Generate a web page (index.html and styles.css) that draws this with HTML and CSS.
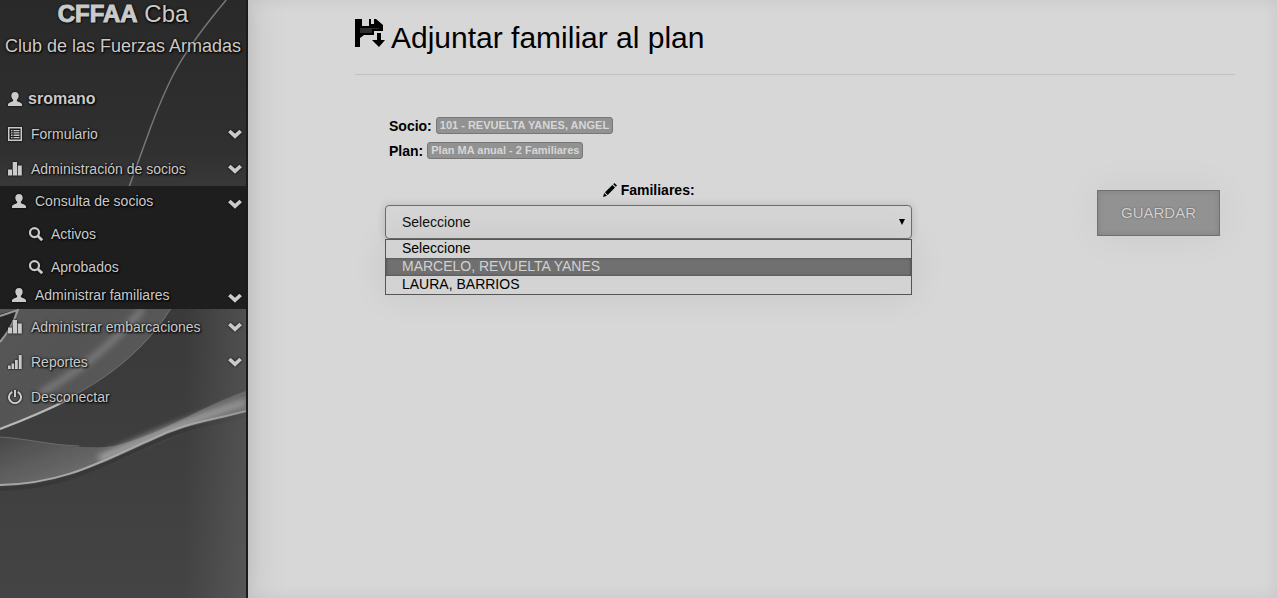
FILE: index.html
```html
<!DOCTYPE html>
<html lang="es">
<head>
<meta charset="utf-8">
<meta name="viewport" content="width=device-width, initial-scale=1">
<title>CFFAA Cba - Adjuntar familiar al plan</title>
<link rel="stylesheet" href="styles.css">
</head>
<body class="page">
<svg class="sprite" width="0" height="0" aria-hidden="true">
  <symbol id="user" viewBox="0 0 14 14"><path d="M7 0C4.700 0 3.300 1.500 3.300 3.700C3.300 5.500 4.100 6.800 5.100 7.700V9C4.600 9.900 0 10.300 0 12.500V14H14V12.500C14 10.300 9.400 9.900 8.900 9V7.700C9.900 6.800 10.700 5.500 10.700 3.700C10.700 1.500 9.300 0 7 0Z"/></symbol>
  <symbol id="list" viewBox="0 0 14 14"><path fill-rule="evenodd" d="M0 0H14V14H0ZM1.500 1.500V12.500H12.500V1.500ZM3 3H4.500V4.300H3ZM5.500 3H11.500V4.300H5.500ZM3 5.300H4.500V6.600H3ZM5.500 5.300H11.500V6.600H5.500ZM3 7.600H4.500V8.900H3ZM5.500 7.600H11.500V8.900H5.500ZM3 9.900H4.500V11.200H3ZM5.500 9.900H11.500V11.200H5.500Z"/></symbol>
  <symbol id="stats" viewBox="0 0 14 14"><path d="M0 7.500H4V13.500H0ZM4.700 0H9V13.500H4.700ZM9.700 3.500H13.800V13.500H9.700Z"/></symbol>
  <symbol id="signal" viewBox="0 0 14 14"><path d="M0 10.500H2.700V14H0ZM3.500 8.500H6.200V14H3.500ZM7 5H9.800V14H7ZM10.700 0H13.700V14H10.700Z"/></symbol>
  <symbol id="search" viewBox="0 0 14 14"><path fill="none" stroke="currentColor" stroke-width="2.200" d="M10 5.600A4.500 4.500 0 1 1 1 5.600A4.500 4.500 0 1 1 10 5.600Z"/><path fill="none" stroke="currentColor" stroke-width="2.800" d="M8.800 8.900L13.200 13.200"/></symbol>
  <symbol id="off" viewBox="0 0 14 14"><path fill="none" stroke="currentColor" stroke-width="2" d="M4.300 1.800A6 6 0 1 0 9.700 1.800"/><path d="M6 0H8V7H6Z"/></symbol>
  <symbol id="chevron" viewBox="0 0 14 10"><path fill="none" stroke="currentColor" stroke-width="3.700" d="M1.300 2L7 7.200L12.700 2"/></symbol>
  <symbol id="save" viewBox="0 0 30 30"><path d="M0 1H7V8H14V1H16V6H19V1H21L28 7V13H19V17H9L5 20V29H0Z"/><path d="M22 15H26V22H30L24 29L17 22H22Z"/><path fill="#2e2e2e" d="M5 10H24V11H17V15H5Z"/></symbol>
  <symbol id="pencil" viewBox="0 0 14 14"><path d="M0 14L1.300 10L4 12.700ZM2 9.300L9.400 2L12 4.600L4.700 12ZM10.200 1.200L11.400 0L14 2.600L12.800 3.800Z"/></symbol>
</svg>

<aside class="sidebar">
  <svg class="waves" viewBox="0 0 248 598" preserveAspectRatio="none" aria-hidden="true">
    <defs>
      <linearGradient id="base" x1="0" y1="0" x2="0" y2="1">
        <stop offset="0" stop-color="#292929"/><stop offset=".25" stop-color="#303030"/><stop offset=".31" stop-color="#383838"/><stop offset=".6" stop-color="#3b3b3b"/><stop offset="1" stop-color="#444"/>
      </linearGradient>
      <linearGradient id="ribbon" gradientUnits="userSpaceOnUse" x1="0" y1="310" x2="90" y2="400">
        <stop offset="0" stop-color="#575757"/><stop offset=".6" stop-color="#545454"/><stop offset="1" stop-color="#585858"/>
      </linearGradient>
      <linearGradient id="fold" gradientUnits="userSpaceOnUse" x1="0" y1="437" x2="20" y2="490">
        <stop offset="0" stop-color="#484848"/><stop offset=".6" stop-color="#5c5c5c"/><stop offset="1" stop-color="#686868"/>
      </linearGradient>
      <linearGradient id="shade" x1="0" y1="0" x2="1" y2="0">
        <stop offset=".75" stop-color="#777" stop-opacity="0"/><stop offset="1" stop-color="#777" stop-opacity=".35"/>
      </linearGradient>
      <filter id="soft"><feGaussianBlur stdDeviation="3"/></filter>
      <filter id="edge"><feGaussianBlur stdDeviation="0.6"/></filter>
    </defs>
    <rect width="248" height="598" fill="url(#base)"/>
    <path d="M228 0C180 57 170 80 152 127Q140 160 129 190" fill="none" stroke="#777" stroke-width="1.500"/>
    <path d="M0 309H172C136 364 87 395 0 429Z" fill="url(#ribbon)"/>
    <path d="M144 309C112 345 85 368 40 394" fill="none" stroke="#909090" stroke-width="6" opacity=".7" filter="url(#soft)"/>
    <path d="M172 309C136 364 87 395 0 429" fill="none" stroke="#707070" stroke-width="1"/>
    <path d="M70 399Q40 414 0 429" fill="none" stroke="#b8b8b8" stroke-width="2" filter="url(#edge)"/>
    <path d="M0 314L16 310Q12 328 0 342Z" fill="#272727"/>
    <path d="M0 316L18 310Q12 328 0 342" fill="none" stroke="#999" stroke-width="2" filter="url(#edge)"/>
    <path d="M0 437C45 441 80 451 115 446C165 434 200 407 248 391V411C211 421 187 422 151 440C105 460 65 484 0 485Z" fill="url(#fold)" filter="url(#edge)"/>
    <path d="M0 437C30 439 50 445 80 446" fill="none" stroke="#6c6c6c" stroke-width="1"/>
    <path d="M248 402C195 419 160 433 100 459" fill="none" stroke="#c0c0c0" stroke-width="7" opacity=".7" filter="url(#soft)"/>
    <path d="M248 411C211 421 187 422 151 440C105 460 65 484 0 485" fill="none" stroke="#a8a8a8" stroke-width="2" filter="url(#edge)"/>
    <path d="M248 415C211 425 187 426 151 444C105 464 65 488 0 489" fill="none" stroke="#383838" stroke-width="4" filter="url(#edge)"/>
    <rect y="309" width="248" height="289" fill="url(#shade)"/>
  </svg>
  <header class="brand">
    <p class="brand-name"><strong>CFFAA</strong> Cba</p>
    <p class="brand-club">Club de las Fuerzas Armadas</p>
  </header>
  <nav class="menu" aria-label="Principal">
    <a class="item item-user" href="#"><svg class="icon"><use href="#user"/></svg><span>sromano</span></a>
    <a class="item" href="#"><svg class="icon"><use href="#list"/></svg><span>Formulario</span><svg class="chevron"><use href="#chevron"/></svg></a>
    <a class="item" href="#"><svg class="icon"><use href="#stats"/></svg><span>Administración de socios</span><svg class="chevron"><use href="#chevron"/></svg></a>
    <div class="submenu">
      <a class="item item-sub" href="#"><svg class="icon"><use href="#user"/></svg><span>Consulta de socios</span><svg class="chevron"><use href="#chevron"/></svg></a>
      <a class="item item-leaf" href="#"><svg class="icon"><use href="#search"/></svg><span>Activos</span></a>
      <a class="item item-leaf" href="#"><svg class="icon"><use href="#search"/></svg><span>Aprobados</span></a>
      <a class="item item-sub" href="#"><svg class="icon"><use href="#user"/></svg><span>Administrar familiares</span><svg class="chevron"><use href="#chevron"/></svg></a>
    </div>
    <a class="item" href="#"><svg class="icon"><use href="#stats"/></svg><span>Administrar embarcaciones</span><svg class="chevron"><use href="#chevron"/></svg></a>
    <a class="item" href="#"><svg class="icon"><use href="#signal"/></svg><span>Reportes</span><svg class="chevron"><use href="#chevron"/></svg></a>
    <a class="item" href="#"><svg class="icon"><use href="#off"/></svg><span>Desconectar</span></a>
  </nav>
</aside>

<main class="content">
  <h1 class="title"><svg class="title-icon" aria-hidden="true"><use href="#save"/></svg><span>Adjuntar familiar al plan</span></h1>
  <form class="form">
    <div class="fields">
      <p class="info">Socio: <span class="badge">101 - REVUELTA YANES, ANGEL</span></p>
      <p class="info">Plan: <span class="badge">Plan MA anual - 2 Familiares</span></p>
      <label class="label" for="familiares"><svg class="pencil" aria-hidden="true"><use href="#pencil"/></svg>Familiares:</label>
      <div class="picker">
        <select class="select" id="familiares"><option>Seleccione</option><option>MARCELO, REVUELTA YANES</option><option>LAURA, BARRIOS</option></select>
        <svg class="arrow" viewBox="0 0 6 6" aria-hidden="true"><path d="M0 0H6L3 6Z"/></svg>
        <ul class="options" role="listbox" aria-label="Familiares">
          <li class="option" role="option">Seleccione</li>
          <li class="option option-active" role="option" aria-selected="true">MARCELO, REVUELTA YANES</li>
          <li class="option" role="option">LAURA, BARRIOS</li>
        </ul>
      </div>
    </div>
    <button class="save" type="button">GUARDAR</button>
  </form>
</main>
</body>
</html>
```
FILE: styles.css
```css
* { box-sizing: border-box; }

.page {
  display: flex;
  min-height: 100vh;
  margin: 0;
  background: #d7d7d7;
  color: #000;
  font: 14px/20px "Liberation Sans", Arial, sans-serif;
}

.sprite { position: absolute; }

.sidebar {
  position: relative;
  flex: none;
  width: 248px;
  overflow: hidden;
  border-right: 2px solid #1b1b1b;
  background: #333;
  color: #cacaca;
  text-shadow: 0 0 3px #000, 1px 1px 2px #000;
  box-shadow: 0 0 40px rgba(0, 0, 0, .12);
}

.waves {
  position: absolute;
  inset: 0;
  width: 100%;
  height: 100%;
}

.brand {
  position: relative;
  height: 81px;
  text-align: center;
  white-space: nowrap;
}

.brand-name {
  margin: 0;
  font-size: 24px;
  line-height: 28px;
}

.brand-name strong { -webkit-text-stroke: 1px #cacaca; }

.brand-club {
  margin: 4px 0 0;
  font-size: 18px;
  line-height: 28px;
}

.menu { position: relative; }

.item {
  display: flex;
  align-items: center;
  gap: 9px;
  height: 35px;
  padding: 0 4px 0 8px;
  color: inherit;
  text-decoration: none;
}

.item-user {
  gap: 6px;
  font-size: 16px;
  font-weight: bold;
}

.submenu {
  padding-top: 1px;
  background: #1e1e1e;
}

.item-sub {
  height: 28px;
  padding-left: 12px;
}

.item-leaf {
  gap: 8px;
  height: 33px;
  padding-top: 4px;
  padding-left: 29px;
}

.icon {
  flex: none;
  width: 14px;
  height: 14px;
  fill: currentColor;
  filter: drop-shadow(0 0 1px #000);
}

.chevron {
  width: 14px;
  height: 10px;
  margin-left: auto;
  filter: drop-shadow(0 0 1px #000);
}

.item-sub .chevron { margin-top: 6px; }

.content {
  flex: 1;
  padding: 0 42px 0 107px;
  box-shadow: inset 0 0 16px rgba(0, 0, 0, .08);
}

.title {
  display: flex;
  gap: 6px;
  height: 75px;
  margin: 0;
  padding-top: 18px;
  border-bottom: 1px solid #c2c2c2;
  font-size: 30px;
  font-weight: normal;
  line-height: 40px;
}

.title-icon {
  width: 30px;
  height: 30px;
}

.form {
  display: grid;
  grid-template-columns: 3fr 1fr;
  align-items: start;
  padding: 38px 15px 0 30px;
}

.fields {
  display: grid;
  margin-right: 99px;
}

.info {
  display: flex;
  align-items: center;
  gap: 4px;
  height: 25px;
  margin: 0;
  padding-left: 4px;
  font-weight: bold;
}

.badge {
  padding: 0 3px;
  border: 1px solid #777;
  border-radius: 3px;
  background: #929292;
  color: #d7d7d7;
  font-size: 11px;
  line-height: 15px;
}

.label {
  display: flex;
  align-items: center;
  justify-content: center;
  gap: 4px;
  height: 20px;
  margin: 17px 0 5px;
  font-weight: bold;
}

.pencil {
  width: 14px;
  height: 14px;
}

.picker { position: relative; }

.select {
  display: block;
  width: 100%;
  height: 34px;
  padding: 0 16px;
  border: 1px solid #6c6c6c;
  border-radius: 4px;
  background: #d5d5d5;
  box-shadow: 0 0 8px rgba(0, 0, 0, .16);
  color: #111;
  font: inherit;
  appearance: none;
}

.arrow {
  position: absolute;
  top: 14px;
  right: 7px;
  width: 6px;
  height: 6px;
}

.options {
  position: absolute;
  top: 100%;
  right: 0;
  left: 0;
  margin: 0;
  padding: 0;
  border: 1px solid #555;
  background: #d3d3d3;
  box-shadow: 0 0 36px rgba(0, 0, 0, .08);
  list-style: none;
}

.option {
  padding: 0 16px 2px;
  line-height: 16px;
}

.option-active {
  background: #707070;
  box-shadow: inset 0 0 3px #444;
  color: #d0d0d0;
}

.save {
  justify-self: end;
  width: 123px;
  height: 46px;
  margin-top: 77px;
  border: 1px solid #707070;
  background: #929292;
  box-shadow: 0 0 40px rgba(0, 0, 0, .06), inset 0 0 6px rgba(0, 0, 0, .12);
  color: #d0d0d0;
  font: 15px/20px "Liberation Sans", Arial, sans-serif;
  text-shadow: 0 0 2px #555;
}
```
